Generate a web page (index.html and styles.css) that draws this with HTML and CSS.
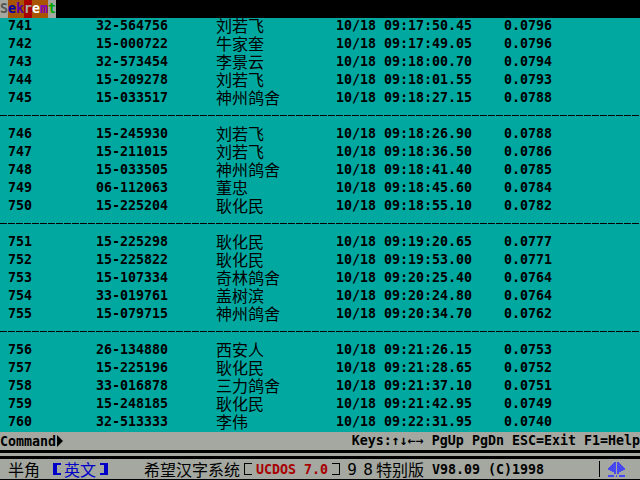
FILE: index.html
```html
<!DOCTYPE html>
<html lang="en">
  <head>
    <meta charset="UTF-8" />
    <title>Sekremt</title>
    <link rel="stylesheet" href="styles.css">
  </head>
  <body>
    <div class="screen">
      <div class="title-bar">
        <span class="t-s">S</span><span class="t-e">e</span><span class="t-k">k</span><span class="t-r">r</span><span class="t-e2">e</span><span class="t-m">m</span><span class="t-t">t</span>
      </div>
      <div class="list">
        <div class="row"><span>741</span><span>32-564756</span><span class="name">刘若飞</span><span>10/18 09:17:50.45</span><span>0.0796</span></div>
        <div class="row"><span>742</span><span>15-000722</span><span class="name">牛家奎</span><span>10/18 09:17:49.05</span><span>0.0796</span></div>
        <div class="row"><span>743</span><span>32-573454</span><span class="name">李景云</span><span>10/18 09:18:00.70</span><span>0.0794</span></div>
        <div class="row"><span>744</span><span>15-209278</span><span class="name">刘若飞</span><span>10/18 09:18:01.55</span><span>0.0793</span></div>
        <div class="row"><span>745</span><span>15-033517</span><span class="name">神州鸽舍</span><span>10/18 09:18:27.15</span><span>0.0788</span></div>
        <div class="sep"></div>
        <div class="row"><span>746</span><span>15-245930</span><span class="name">刘若飞</span><span>10/18 09:18:26.90</span><span>0.0788</span></div>
        <div class="row"><span>747</span><span>15-211015</span><span class="name">刘若飞</span><span>10/18 09:18:36.50</span><span>0.0786</span></div>
        <div class="row"><span>748</span><span>15-033505</span><span class="name">神州鸽舍</span><span>10/18 09:18:41.40</span><span>0.0785</span></div>
        <div class="row"><span>749</span><span>06-112063</span><span class="name">董忠</span><span>10/18 09:18:45.60</span><span>0.0784</span></div>
        <div class="row"><span>750</span><span>15-225204</span><span class="name">耿化民</span><span>10/18 09:18:55.10</span><span>0.0782</span></div>
        <div class="sep"></div>
        <div class="row"><span>751</span><span>15-225298</span><span class="name">耿化民</span><span>10/18 09:19:20.65</span><span>0.0777</span></div>
        <div class="row"><span>752</span><span>15-225822</span><span class="name">耿化民</span><span>10/18 09:19:53.00</span><span>0.0771</span></div>
        <div class="row"><span>753</span><span>15-107334</span><span class="name">奇林鸽舍</span><span>10/18 09:20:25.40</span><span>0.0764</span></div>
        <div class="row"><span>754</span><span>33-019761</span><span class="name">盖树滨</span><span>10/18 09:20:24.80</span><span>0.0764</span></div>
        <div class="row"><span>755</span><span>15-079715</span><span class="name">神州鸽舍</span><span>10/18 09:20:34.70</span><span>0.0762</span></div>
        <div class="sep"></div>
        <div class="row"><span>756</span><span>26-134880</span><span class="name">西安人</span><span>10/18 09:21:26.15</span><span>0.0753</span></div>
        <div class="row"><span>757</span><span>15-225196</span><span class="name">耿化民</span><span>10/18 09:21:28.65</span><span>0.0752</span></div>
        <div class="row"><span>758</span><span>33-016878</span><span class="name">三力鸽舍</span><span>10/18 09:21:37.10</span><span>0.0751</span></div>
        <div class="row"><span>759</span><span>15-248185</span><span class="name">耿化民</span><span>10/18 09:21:42.95</span><span>0.0749</span></div>
        <div class="row"><span>760</span><span>32-513333</span><span class="name">李伟</span><span>10/18 09:22:31.95</span><span>0.0740</span></div>
      </div>
      <div class="command-bar">
        <span class="prompt">Command<i class="prompt-arrow"></i></span>
        <span>Keys:&#8593;&#8595;&#8592;&#8594; PgUp PgDn ESC=Exit F1=Help</span>
      </div>
      <div class="rules"></div>
      <div class="status-bar">
        <span class="half">半角</span>
        <span class="mode"><i class="bracket-l"></i>英文<i class="bracket-r"></i></span>
        <span class="system">希望汉字系统</span>
        <i class="box-l"></i>
        <span class="ucdos">UCDOS 7.0</span>
        <i class="box-r"></i>
        <span class="num">9</span>
        <span class="num">8</span>
        <span class="special">特别版</span>
        <span class="version">V98.09 (C)1998</span>
        <i class="divider"></i>
        <svg class="logo" width="17" height="15" viewBox="0 0 17 15">
          <path d="M6 0h2v12h-2v-2h-2v-1h-2v-1h-2v-2h1v-1h1v-1h1v-1h1v-1h1v-1h1zM9 0h2v1h1v1h1v1h1v1h1v1h1v1h1v2h-2v1h-2v1h-2v2h-2z" fill="#4848f0"/>
          <path d="M0 13h6v2h-6zM8 13h1v2h-1zM11 13h6v2h-6z" fill="#4848f0"/>
        </svg>
      </div>
    </div>
  </body>
</html>
```

FILE: styles.css
```css
* {
  box-sizing: border-box;
}

body {
  margin: 0;
  background-color: #000;
}

.screen {
  width: 640px;
  height: 480px;
  overflow: hidden;
  display: flex;
  flex-direction: column;
  font-family: "DejaVu Sans Mono", "Noto Sans CJK SC", monospace;
  font-size: 13.3px;
  font-weight: bold;
  color: #000;
}

.title-bar {
  height: 18px;
  flex: none;
  display: flex;
  background-color: #000;
  line-height: 17px;
}

.title-bar span {
  width: 8px;
  height: 18px;
}

.t-s { background-color: #a4a8a0; color: #555; }
.t-e { background-color: #a85400; color: #0000a8; }
.t-k { background-color: #a85400; color: #5400a8; }
.t-r { background-color: #a80000; color: #aaa; }
.t-e2 { background-color: #a85400; color: #fff; }
.t-m { background-color: #a85400; color: #8000c0; }
.t-t { background-color: #a4a8a0; color: #00a800; }

.list {
  height: 414px;
  flex: none;
  background-color: #00a8a0;
}

.row {
  height: 18px;
  display: grid;
  grid-template-columns: 88px 120px 120px 168px 1fr;
  padding-left: 8px;
  line-height: 15px;
  white-space: pre;
}

.name {
  height: 18px;
  font-family: "Noto Sans CJK SC", sans-serif;
  font-size: 16px;
  font-weight: normal;
  line-height: 15px;
}

.sep {
  height: 18px;
  padding-top: 7px;
}

.sep::before {
  content: "";
  display: block;
  height: 1px;
  background: repeating-linear-gradient(to right, #000 0, #000 7px, transparent 7px, transparent 8px);
}

.command-bar {
  height: 18px;
  flex: none;
  display: flex;
  justify-content: space-between;
  background-color: #a4a8a0;
  line-height: 17px;
}

.prompt {
  display: flex;
  align-items: center;
}

.prompt-arrow {
  width: 0;
  height: 0;
  margin-left: 1px;
  border-left: 6px solid #000;
  border-top: 6px solid transparent;
  border-bottom: 6px solid transparent;
}

.rules {
  height: 9px;
  flex: none;
  background-color: #a4a8a0;
  border-top: 3px solid #000;
  border-bottom: 3px solid #000;
}

.status-bar {
  height: 21px;
  flex: none;
  display: flex;
  align-items: center;
  background-color: #a4a8a0;
  border-bottom: 1px solid #000;
  padding-left: 8px;
  white-space: pre;
}

.half,
.mode,
.system,
.special {
  font-family: "Noto Sans CJK SC", sans-serif;
  font-size: 16px;
  font-weight: normal;
  line-height: 18px;
}

.half {
  width: 45px;
}

.mode {
  width: 91px;
  display: flex;
  align-items: center;
  color: #0000c8;
}

.mode i {
  width: 8px;
  height: 12px;
  border: solid #0000c8;
}

.bracket-l {
  border-width: 2px 0 2px 4px !important;
  margin-right: 3px;
}

.bracket-r {
  border-width: 2px 4px 2px 0 !important;
  margin-left: 4px;
}

.system {
  width: 100px;
}

.box-l,
.box-r {
  width: 8px;
  height: 12px;
  border: solid #000;
  border-width: 1px 0 1px 1px;
}

.box-r {
  border-width: 1px 1px 1px 0;
  margin: 0 4px;
}

.ucdos {
  width: 76px;
  padding-left: 4px;
  color: #a80000;
}

.num {
  width: 16px;
  font-size: 16px;
  font-weight: normal;
  text-align: center;
}

.special {
  width: 48px;
}

.version {
  width: 112px;
  margin-left: 8px;
}

.divider {
  width: 1px;
  height: 16px;
  background-color: #000;
  margin-left: 55px;
}

.logo {
  margin-left: 8px;
}
```
